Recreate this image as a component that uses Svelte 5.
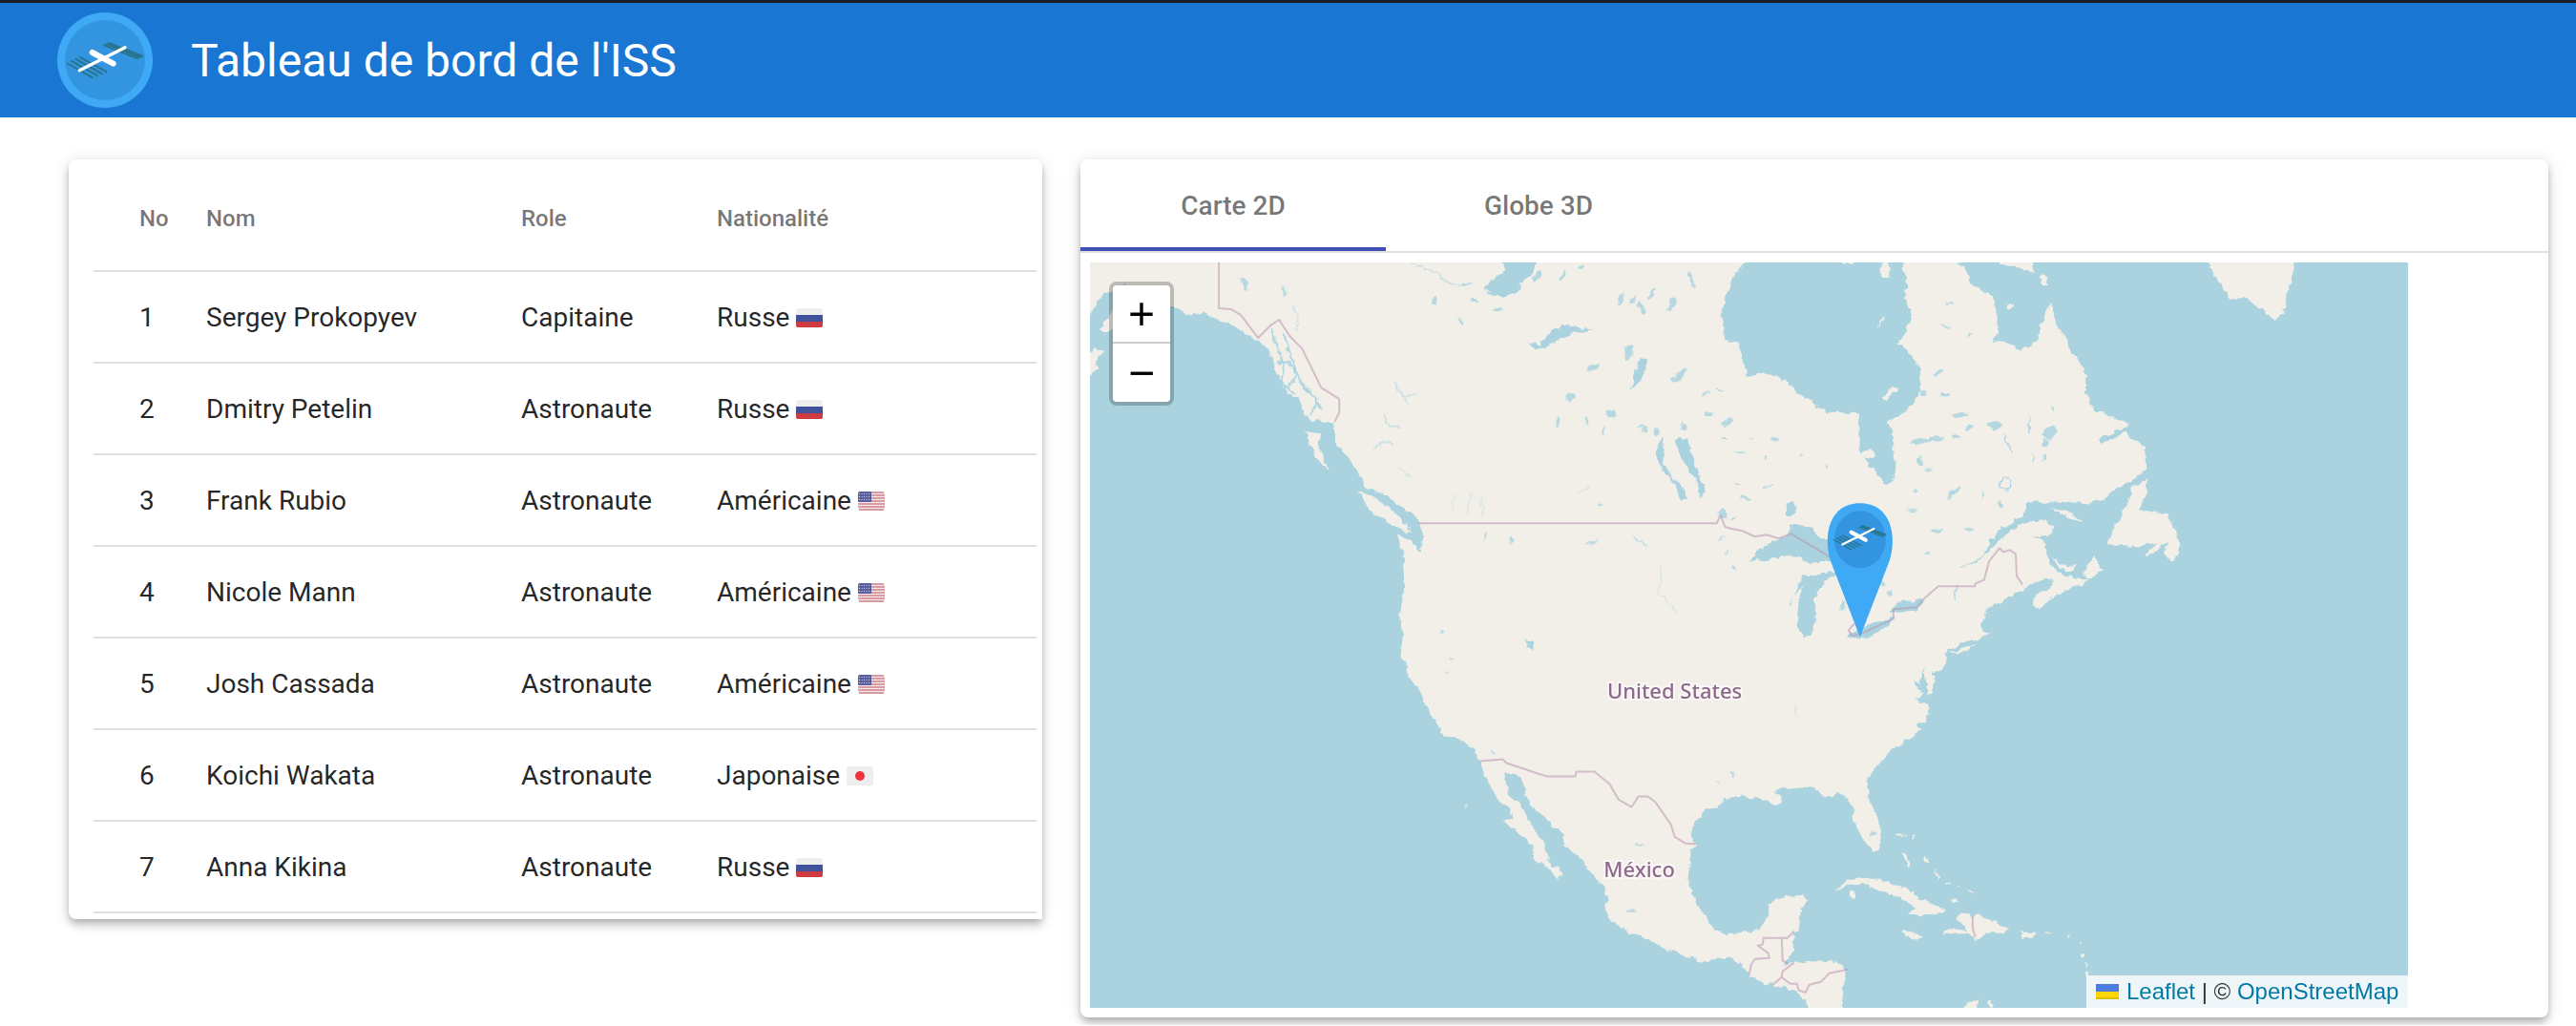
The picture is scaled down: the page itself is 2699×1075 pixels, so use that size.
<script>
  const crew = [
    { name: 'Sergey Prokopyev', role: 'Capitaine', nationality: 'Russe', flag: 'ru' },
    { name: 'Dmitry Petelin', role: 'Astronaute', nationality: 'Russe', flag: 'ru' },
    { name: 'Frank Rubio', role: 'Astronaute', nationality: 'Américaine', flag: 'us' },
    { name: 'Nicole Mann', role: 'Astronaute', nationality: 'Américaine', flag: 'us' },
    { name: 'Josh Cassada', role: 'Astronaute', nationality: 'Américaine', flag: 'us' },
    { name: 'Koichi Wakata', role: 'Astronaute', nationality: 'Japonaise', flag: 'jp' },
    { name: 'Anna Kikina', role: 'Astronaute', nationality: 'Russe', flag: 'ru' }
  ];
  const tabs = ['Carte 2D', 'Globe 3D'];
  let active = $state(0);

  // Minor lakes: centre x, centre y, radius x, radius y, rotation
  const lakes = [
    [1304, 298, 2, 7, -25], [1345, 305, 1, 6, -10], [1502, 316, 2, 5, 10], [1544, 315, 4, 2, 0], [1568, 325, 5, 2, 0],
    [1530, 336, 4, 2, 20], [1536, 298, 6, 1, -20], [1610, 290, 8, 3, -50], [1636, 290, 7, 2, -60], [1656, 280, 3, 2, 0],
    [1697, 313, 3, 6, 15], [1710, 314, 2, 5, 30], [1719, 323, 3, 7, -25], [1730, 307, 2, 7, 35], [1751, 318, 3, 8, 20],
    [1772, 294, 2, 9, -20], [1706, 369, 4, 7, 10], [1669, 385, 7, 3, -35], [1760, 393, 4, 9, 40], [1751, 398, 3, 3, 0],
    [1645, 416, 4, 5, 20], [1688, 433, 6, 4, 20], [1662, 441, 2, 4, 0], [1632, 442, 2, 5, 0], [1680, 450, 1, 5, 0],
    [1718, 446, 2, 2, 0], [1735, 453, 3, 3, 0], [1722, 449, 2, 4, 20], [1763, 447, 3, 4, 0], [1790, 433, 4, 2, 0],
    [1809, 442, 7, 2, -35], [1806, 459, 5, 1, 0], [1834, 460, 2, 1, 0], [1858, 460, 4, 2, 10], [1822, 473, 6, 1, 0],
    [1849, 479, 2, 2, 0], [1887, 477, 1, 2, 0], [1913, 488, 1, 2, 0], [1786, 413, 4, 1, -15], [1800, 408, 4, 1, 0],
    [1829, 522, 7, 2, 15], [1851, 510, 5, 1, -20], [1820, 508, 3, 1, 0], [1804, 538, 5, 4, 0], [1816, 543, 3, 2, 0],
    [1802, 564, 4, 1, -20], [1808, 578, 1, 3, 20], [1816, 594, 2, 2, 0], [2036, 413, 6, 3, 15], [2030, 390, 7, 2, -25],
    [2038, 342, 6, 1, 10], [2042, 318, 4, 1, 0], [2063, 352, 4, 1, -40], [2014, 412, 3, 3, 0], [2053, 435, 7, 2, -15],
    [2010, 462, 10, 3, -10], [2026, 460, 9, 2, -5], [2049, 457, 4, 2, 0], [2061, 448, 5, 2, -20], [2089, 445, 8, 4, 0],
    [2103, 465, 1, 12, -30], [2011, 483, 3, 6, -10], [2020, 492, 4, 1, 0], [2046, 515, 3, 9, 40], [2006, 514, 2, 2, 0],
    [2076, 518, 1, 4, 0], [2096, 528, 2, 6, 0], [2030, 555, 6, 2, -10], [2062, 555, 4, 2, 10], [2001, 535, 6, 1, 0],
    [2018, 578, 2, 2, 0], [2147, 453, 8, 6, -30], [2143, 464, 4, 3, 0], [2140, 480, 2, 4, 0], [2150, 427, 2, 2, 0],
    [2129, 480, 1, 4, 0], [2125, 445, 1, 9, 0], [2048, 621, 1, 9, 5], [1962, 873, 3, 3, 0], [1583, 566, 2, 3, 0],
    [1668, 568, 8, 1, -25], [1718, 567, 9, 1, 30], [1557, 562, 1, 3, 0], [1511, 662, 2, 2, 0], [1521, 690, 1, 2, 0],
    [1516, 705, 2, 1, 0], [1564, 787, 3, 1, 30], [1716, 884, 5, 1, 0], [1709, 954, 5, 1, 0], [1815, 811, 1, 4, -20],
    [1800, 820, 2, 1, 0], [1676, 528, 2, 2, 0], [1816, 345, 2, 1, 0], [1970, 608, 3, 6, -30], [1979, 622, 2, 2, 0],
    [1930, 634, 3, 5, 10], [1876, 631, 1, 3, 0]
  ];

  // Small islands, same layout as the lakes
  const islands = [
    [1974, 283, 5, 9, 5], [1957, 476, 7, 4, 10], [2105, 321, 3, 4, 20], [2141, 293, 4, 7, -20], [1979, 412, 3, 8, 35],
    [1973, 417, 3, 2, 0], [1984, 408, 3, 2, 0], [1970, 337, 1, 6, 25], [1940, 937, 3, 3, 0], [1996, 900, 2, 9, -25],
    [1990, 874, 5, 1, 0], [2005, 877, 1, 4, 0], [2017, 900, 1, 4, -30], [2028, 916, 1, 5, -20], [2040, 925, 3, 1, 0],
    [2047, 943, 4, 2, -10], [2065, 934, 4, 1, 20], [2052, 928, 1, 1, 0], [2145, 977, 2, 1, 0], [2166, 980, 1, 1, 0],
    [2178, 986, 1, 1, 0], [2181, 1001, 2, 3, 0], [2184, 1010, 1, 3, 0], [2187, 1020, 2, 2, 0], [2085, 1052, 2, 4, 0],
    [1536, 844, 1, 1, 0]
  ];
</script>

{#snippet station()}
  <g fill="none" stroke="#28748f" stroke-width="6">
    <path d="M60 197 142 244M73 190 158 238M86 183 172 232M100 178 187 226" />
    <path d="M175 140 285 184M183 136 293 180M190 133 300 176" />
  </g>
  <g fill="none" stroke="#fff" stroke-linecap="round">
    <path d="M100 220 243 148" stroke-width="10" />
    <path d="M140 164 206 199" stroke-width="18" />
  </g>
{/snippet}

{#snippet flagIcon(code)}
  <svg class="flag" viewBox="0 0 28 20" aria-hidden="true">
    {#if code === 'ru'}
      <rect width="28" height="20" rx="2" fill="#eee" />
      <path d="M0 7h28v7H0z" fill="#41549b" />
      <path d="M0 14h28v4a2 2 0 0 1-2 2H2a2 2 0 0 1-2-2z" fill="#d03b43" />
    {:else if code === 'us'}
      <rect width="28" height="20" rx="2" fill="#f6e8ea" />
      <path d="M1 1h26M0 4h28M0 7h28M0 10h28M0 13h28M0 16h28M1 19h26" stroke="#b9505c" stroke-width="1" />
      <path d="M2 0h12v11H0V2a2 2 0 0 1 2-2z" fill="#5a609c" />
      <path d="M1 2.500h12M1 5.500h12M1 8.500h12" stroke="#c9cbe4" stroke-dasharray="1 1.500" />
    {:else}
      <rect width="28" height="20" rx="2" fill="#eee" />
      <circle cx="14" cy="10" r="5" fill="#f0323f" />
    {/if}
  </svg>
{/snippet}

<header>
  <svg class="logo" viewBox="30 38 300 300" aria-hidden="true">
    <circle cx="180" cy="188" r="150" fill="#3fa9f5" />
    <circle cx="180" cy="188" r="126" fill="#3395df" />
    {@render station()}
  </svg>
  <h1>Tableau de bord de l'ISS</h1>
</header>

<main>
  <section class="card crew">
    <table>
      <thead>
        <tr><th class="no">No</th><th class="name">Nom</th><th class="role">Role</th><th>Nationalité</th></tr>
      </thead>
      <tbody>
        {#each crew as member, i}
          <tr>
            <td class="no">{i + 1}</td>
            <td>{member.name}</td>
            <td>{member.role}</td>
            <td><span class="nation">{member.nationality}{@render flagIcon(member.flag)}</span></td>
          </tr>
        {/each}
      </tbody>
    </table>
  </section>

  <section class="card">
    <div class="tabs" role="tablist">
      {#each tabs as tab, i}
        <button role="tab" aria-selected={active === i} class:active={active === i} onclick={() => (active = i)}>{tab}</button>
      {/each}
    </div>
    <div class="panel">
      <div class="map">
        <svg viewBox="1142 275 1380 780" preserveAspectRatio="xMidYMid slice" role="img" aria-label="Carte">
          <defs>
            <filter id="coast" filterUnits="userSpaceOnUse" x="1130" y="263" width="1404" height="804">
              <feTurbulence type="fractalNoise" baseFrequency="0.13" numOctaves="2" seed="4" />
              <feDisplacementMap in="SourceGraphic" scale="7" xChannelSelector="R" yChannelSelector="G" />
              <feGaussianBlur stdDeviation="0.700" />
            </filter>
          </defs>
          <rect x="1142" y="275" width="1380" height="780" fill="#aad3df" />
          <g filter="url(#coast)">
            <g fill="#f2efe9">
              <path d="M1130 263V337L1142 331 1150 314 1163 305 1181 296 1172 310 1163 330 1152 345 1160 349 1176 338 1200 326 1229 321 1243 330 1260 328 1276 335 1292 342 1318 357 1330 368 1335 387 1349 412 1361 417 1367 433 1373 442 1381 440 1397 443 1399 463 1413 480 1424 497 1430 510 1448 517 1462 527 1480 538 1488 548 1491 563 1488 578 1480 567 1463 560 1470 580 1472 608 1466 647 1470 662 1467 686 1474 693 1475 708 1486 722 1493 739 1509 764 1511 771 1524 772 1545 784 1550 798 1563 828 1570 839 1582 847 1584 858 1574 860 1588 870 1606 885 1606 899 1624 911 1631 921 1637 916 1634 909 1625 906 1615 881 1599 856 1591 840 1579 831 1576 810 1581 808 1593 814 1597 828 1606 846 1624 860 1639 878 1639 886 1652 895 1666 913 1679 927 1684 941 1681 954 1688 964 1706 977 1724 982 1745 994 1766 1001 1784 1008 1799 1003 1813 1003 1824 1010 1832 1021 1845 1028 1857 1031 1884 1039 1891 1047 1900 1065H1930L1929 1055 1931 1030 1935 1016 1924 1007 1909 1006 1881 1008 1869 1010 1879 994 1879 977 1884 973 1886 954 1894 941 1884 937 1859 941 1853 947 1852 959 1843 973 1831 975 1807 979 1793 971 1784 957 1774 941 1768 920 1770 892 1776 885 1772 876 1775 860 1786 849 1799 846 1806 836 1824 833 1845 837 1863 843 1867 835 1858 830 1870 825 1899 825 1913 835 1925 830 1938 840 1942 849 1940 858 1947 870 1959 890 1966 892 1971 877 1966 854 1957 835 1956 817 1967 800 1985 782 1995 778 1998 772 2012 765 2007 760 2017 755 2021 748 2017 737 2006 731 2014 727 2003 713 2011 715 2014 699 2019 729 2028 715 2023 702 2032 703 2040 690 2038 682 2053 673 2073 668 2085 663 2077 660 2075 652 2080 638 2093 632 2117 618 2134 609 2150 605 2147 614 2131 622 2129 632 2136 638 2150 625 2188 608 2172 605 2156 600 2147 590 2142 572 2137 565 2127 563 2148 560 2152 550 2138 544 2117 548 2097 563 2078 582 2077 578 2093 555 2117 542 2123 527 2147 525 2180 527 2200 525 2217 511 2234 503 2248 490 2247 468 2234 460 2225 452 2200 465 2198 460 2219 450 2230 445 2216 438 2194 430 2184 413 2184 393 2178 377 2169 370 2164 355 2153 337 2146 318 2139 338 2133 357 2115 367 2100 357 2088 358 2093 343 2088 310 2068 302 2062 288 2050 275 2046 263H1993V285L1998 297 1995 312 2002 332 1995 348 1988 360 2002 372 2010 387 2011 410 2000 428 1977 442 1982 453 1983 477 1987 490 1982 502 1975 508 1963 493 1948 473 1947 433 1913 431 1887 415 1873 400 1847 390 1830 395 1822 360 1807 357 1803 333 1807 310 1815 290 1828 275 1832 263Z" />
              <path d="M2312 263 2314 280 2325 297 2335 313 2351 312 2367 323 2382 335 2392 328 2396 303 2402 287 2400 263Z" />
              <path d="M2250 502 2246 520 2241 533 2256 537 2271 538 2273 547 2278 557 2283 572 2276 588 2266 580 2272 566 2255 580 2246 583 2258 568 2241 572 2207 570 2214 553 2225 533 2234 510Z" />
              <path d="M2148 532 2166 535 2180 546 2166 543ZM2150 583 2162 593 2175 592 2170 599 2157 595ZM2193 582 2201 597 2188 606 2182 600ZM2040 683 2070 674 2055 684ZM2093 263 2094 278 2112 279 2130 286 2128 263ZM1929 263 1930 277 1940 276 1942 263Z" />
              <path d="M1422 515 1436 518 1456 532 1474 550 1478 559 1464 553 1436 535ZM1367 452 1384 454 1381 467 1393 494 1379 480ZM1130 376 1142 374 1147 363 1156 369 1148 379 1150 387 1130 400Z" />
              <path d="M1921 933 1934 922 1950 917 1973 922 1994 930 2016 943 2038 953 2026 957 1998 958 2005 950 1991 940 1980 937 1960 929 1948 925 1937 926 1926 932Z" />
              <path d="M1991 976 2003 975 2015 980 2007 984ZM2047 958 2073 958 2087 965 2103 972 2100 977 2080 977 2069 985 2064 978 2035 977 2037 973 2060 975 2055 965ZM2117 976H2134L2131 981H2117ZM2055 1065 2057 1054 2067 1046 2072 1049 2069 1065Z" />
              {#each islands as [x, y, rx, ry, r]}
                <ellipse cx={x} cy={y} {rx} {ry} transform="rotate({r} {x} {y})" />
              {/each}
            </g>
            <g fill="#aad3df">
              <path d="M1568 263 1577 283 1567 290 1554 302 1563 309 1575 312 1589 307 1592 296 1604 288 1618 263Z" />
              <path d="M1602 358 1612 362 1624 347 1636 340 1670 346 1646 350 1624 361 1608 366ZM1717 375 1726 377 1720 397 1708 409 1712 392Z" />
              <path d="M1755 460 1767 458 1773 480 1782 503 1786 513 1780 523 1779 507 1770 493 1760 480ZM1732 473 1742 457 1743 470 1743 485 1751 500 1760 507 1767 523 1760 525 1756 510 1742 493Z" />
              <ellipse cx="1875" cy="533" rx="5" ry="8" />
              <path d="M1833 587 1847 572 1870 562 1878 548 1900 553 1905 565 1920 565 1924 587 1892 590 1882 582 1867 583 1850 587Z" />
              <path d="M1887 605 1907 600 1927 598 1912 608 1900 628 1902 650 1897 665 1888 667 1882 653 1884 627 1890 612 1880 622Z" />
              <path d="M1933 666 1950 657 1967 650 1984 646 1977 657 1953 668 1940 669ZM1977 641 1990 630 2015 628 2008 640 1992 641ZM1596 669 1606 672 1606 681 1600 678Z" />
              <g opacity=".85">
                {#each lakes as [x, y, rx, ry, r]}
                  <ellipse cx={x} cy={y} {rx} {ry} transform="rotate({r} {x} {y})" />
                {/each}
              </g>
            </g>
            <g fill="none" stroke="#aad3df" stroke-width="1.500">
              <path d="M1333 345 1340 368 1345 385 1342 400 1355 412M1345 350 1352 372 1360 395 1368 408 1380 420 1372 435M1338 380 1350 378 1358 392 1350 405M1365 405 1376 415 1385 428M1350 418 1362 430" stroke-width="2" />
              <path d="M2078 582 2066 589 2053 595" />
              <path d="M1478 276 1505 286 1515 296 1535 300M1461 399 1468 413 1475 424M1471 416 1485 411M1438 471 1450 462 1460 466M1356 320 1360 335 1358 347M1449 434 1455 446 1467 447" opacity=".6" />
              <path d="M1739 590 1740 608 1736 622 1747 629 1757 643M1524 518 1520 538M1540 515 1537 540M1552 520 1553 542M1879 738 1881 750M1652 517 1665 508M1466 490 1478 500" opacity=".35" />
              <ellipse cx="2100" cy="506" rx="5" ry="6" />
            </g>
          </g>
          <g fill="none" stroke="#b894ae" stroke-opacity=".55" stroke-width="2" stroke-linejoin="round">
            <path d="M1277 275V323L1290 324 1300 330 1318 354 1332 340 1340 335 1351 352 1364 365 1384 406 1403 418V432L1398 442" />
            <path d="M1486 548H1798L1802 540 1807 552 1815 554 1825 556 1838 562 1850 560 1863 564 1876 559 1918 584" />
            <path d="M1942 653 1936 660 1940 666 1953 662 1983 648V638L2008 636 2015 627 2030 614H2068L2069 611 2078 607 2083 588 2094 574 2098 578 2105 576 2111 580 2112 603 2118 612" />
            <path d="M1550 797 1574 795 1578 799 1620 813H1650L1651 808H1670L1686 821 1695 837 1709 845 1716 834H1726L1734 840 1750 863 1754 876 1765 883 1776 884" />
            <path d="M1832 1021 1834 1010 1838 1004 1853 1003 1852 998 1841 990 1846 989 1847 982H1872L1879 975M1866 982 1867 1006 1872 1008M1879 1008 1867 1017 1866 1023 1857 1031M1866 1023 1875 1030H1882L1884 1037 1891 1039 1895 1031 1907 1028 1916 1019 1935 1015M2066 959V973L2069 981" />
          </g>
          <g class="labels">
            <text x="1754" y="732">United States</text>
            <text x="1717" y="918">México</text>
          </g>
          <g>
            <path d="M1948 667 1917 587C1909 560 1916 527 1948 527S1987 560 1979 587Z" fill="#3fa9f5" />
            <ellipse cx="1948" cy="565" rx="27" ry="30" fill="#3395df" />
            <g transform="translate(1948 562) scale(.23) translate(-180 -184)">{@render station()}</g>
          </g>
        </svg>
        <div class="zoom">
          <button aria-label="Zoom avant">+</button>
          <button aria-label="Zoom arrière">−</button>
        </div>
        <div class="attribution">
          <a href="#leaflet"><svg viewBox="0 0 24 16" aria-hidden="true"><path fill="#4c7be1" d="M0 0h24v8H0z" /><path fill="#ffd500" d="M0 8h24v6H0z" /><path fill="#e0bc00" d="M0 14h24v2H0z" /></svg>Leaflet</a> | © <a href="#openstreetmap">OpenStreetMap</a>
        </div>
      </div>
    </div>
  </section>
</main>

<style>
  :global(body) {
    margin: 0;
    background: #fff;
    font-family: Roboto, sans-serif;
    color: rgba(0, 0, 0, 0.87);
  }
  header {
    display: flex;
    align-items: center;
    gap: 40px;
    height: 120px;
    padding-left: 60px;
    border-top: 3px solid #1b1b26;
    background: #1976d2;
    color: #fff;
  }
  .logo {
    width: 100px;
    height: 100px;
  }
  h1 {
    margin: 0;
    padding-top: 2px;
    font-size: 48px;
    font-weight: 400;
    line-height: 56px;
  }
  main {
    display: grid;
    grid-template-columns: 1020fr 1538fr;
    align-items: start;
    gap: 40px;
    padding: 44px 29px 8px 72px;
  }
  .card {
    border-radius: 8px;
    background: #fff;
    box-shadow: 0 3px 7px -2px rgba(0, 0, 0, 0.2), 0 7px 9px rgba(0, 0, 0, 0.14), 0 2px 17px rgba(0, 0, 0, 0.12);
  }
  .crew {
    padding: 7px 6px 6px 26px;
    border-bottom-right-radius: 0;
  }
  table {
    width: 100%;
    table-layout: fixed;
    border-collapse: separate;
    border-spacing: 0;
  }
  th,
  td {
    box-sizing: border-box;
    height: 96px;
    padding: 2px 0 0;
    border-bottom: 2px solid #e0e0e0;
    text-align: left;
    font-size: 28px;
    line-height: 32px;
  }
  th {
    height: 111px;
    padding-top: 0;
    font-size: 24px;
    font-weight: 500;
    color: rgba(0, 0, 0, 0.54);
  }
  .no {
    width: 118px;
    padding-left: 48px;
  }
  .name {
    width: 330px;
  }
  .role {
    width: 205px;
  }
  .nation {
    display: flex;
    align-items: center;
    gap: 7px;
  }
  .flag {
    width: 28px;
    height: 20px;
  }
  .tabs {
    display: flex;
    border-bottom: 2px solid #e0e0e0;
  }
  .tabs button {
    width: 320px;
    height: 96px;
    padding: 6px 0 0;
    border: 0;
    border-bottom: 4px solid transparent;
    background: none;
    font: 500 28px/32px Roboto, sans-serif;
    color: rgba(0, 0, 0, 0.54);
  }
  .tabs button.active {
    border-bottom-color: #3f51b5;
  }
  .panel {
    padding: 10px;
  }
  .map {
    position: relative;
    width: 91%;
    aspect-ratio: 1380 / 780;
    background: #aad3df;
  }
  .map > svg {
    display: block;
    width: 100%;
    height: 100%;
  }
  .labels {
    font: 500 22px 'Noto Sans', sans-serif;
    text-anchor: middle;
    fill: #8d6a8d;
    stroke: #fbf8f6;
    stroke-width: 4px;
    paint-order: stroke;
  }
  .zoom {
    position: absolute;
    top: 20px;
    left: 20px;
    display: flex;
    flex-direction: column;
    border: 4px solid rgba(0, 0, 0, 0.22);
    border-radius: 8px;
    background: #fff;
    background-clip: padding-box;
  }
  .zoom button {
    width: 60px;
    height: 61px;
    padding: 0;
    border: 0;
    background: none;
    font: 48px/60px 'Liberation Sans', sans-serif;
    color: #000;
  }
  .zoom button:first-child {
    border-bottom: 2px solid #ccc;
  }
  .attribution {
    position: absolute;
    right: 0;
    bottom: 0;
    padding: 0 10px;
    background: rgba(255, 255, 255, 0.8);
    font: 24px/34px 'Liberation Sans', sans-serif;
    color: #333;
  }
  .attribution a {
    color: #0078a8;
    text-decoration: none;
  }
  .attribution svg {
    width: 24px;
    height: 16px;
    margin-right: 8px;
  }
</style>
